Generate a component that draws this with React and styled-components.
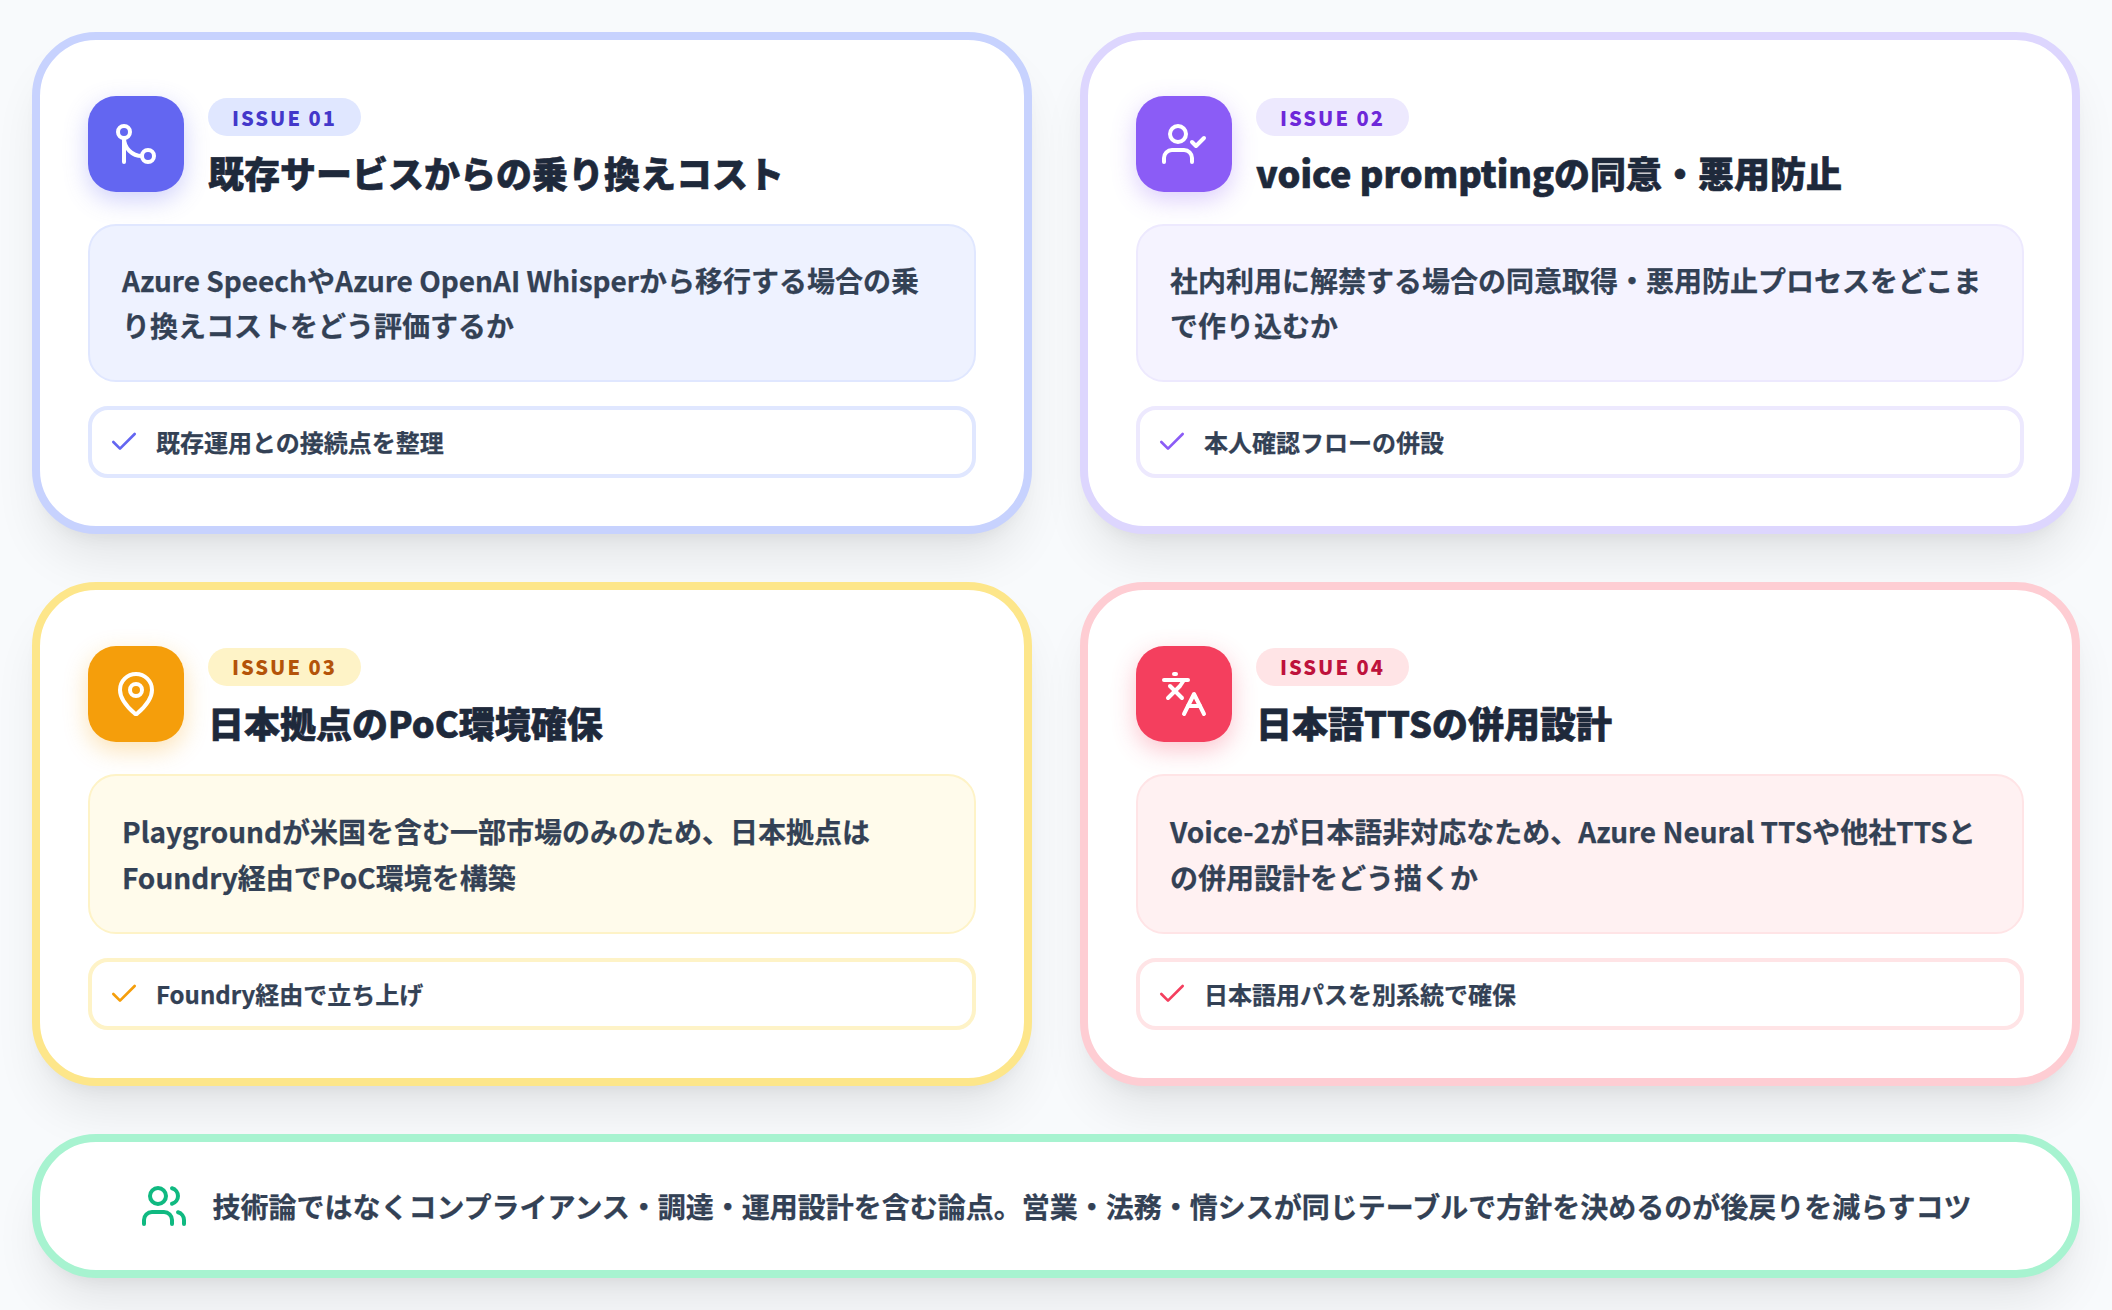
import React from "react";
import styled, { createGlobalStyle } from "styled-components";
import { GitMerge, UserCheck, MapPin, Languages, Users, Check } from "lucide-react";

const Global = createGlobalStyle`
  * { box-sizing: border-box; }
  html, body { margin: 0; padding: 0; background: #f8fafc; }
  body { font-family: "Noto Sans CJK JP", "Noto Sans", sans-serif; }
`;

const Page = styled.main`
  width: 2112px;
  height: 1310px;
  padding: 32px;
  display: flex;
  flex-direction: column;
  gap: 48px;
  background: #f8fafc;
`;

const Grid = styled.section`
  display: grid;
  grid-template-columns: 1fr 1fr;
  gap: 48px;
`;

const shadow = "0 32px 50px -10px rgba(0, 0, 0, 0.09), 0 12px 20px -12px rgba(0, 0, 0, 0.08)";

const Card = styled.article`
  background: #fff;
  border: 8px solid ${(p) => p.$t.border};
  border-radius: 64px;
  padding: 56px 48px 48px;
  box-shadow: ${shadow};
  display: flex;
  flex-direction: column;
`;

const Header = styled.header`
  display: flex;
  align-items: flex-start;
  gap: 24px;
  margin-bottom: 32px;
`;

const IconBox = styled.div`
  width: 96px;
  height: 96px;
  flex: none;
  border-radius: 28px;
  background: ${(p) => p.$t.main};
  color: #fff;
  display: flex;
  align-items: center;
  justify-content: center;
  box-shadow: 0 8px 24px ${(p) => p.$t.glow};
`;

const Heading = styled.div`
  display: flex;
  flex-direction: column;
  align-items: flex-start;
  gap: 16px;
  padding-top: 2px;
`;

const Pill = styled.span`
  padding: 0 24px;
  height: 38px;
  display: inline-flex;
  align-items: center;
  border-radius: 19px;
  background: ${(p) => p.$t.pill};
  color: ${(p) => p.$t.pillText};
  font-size: 20px;
  font-weight: 900;
  letter-spacing: 2px;
`;

const Title = styled.h2`
  margin: 0;
  font-size: 36px;
  line-height: 40px;
  font-weight: 900;
  color: #1e293b;
  -webkit-text-stroke: 0.6px #1e293b;
`;

const Desc = styled.p`
  margin: 0 0 24px;
  padding: 32px;
  background: ${(p) => p.$t.soft};
  border: 2px solid ${(p) => p.$t.line};
  border-radius: 28px;
  font-size: 28px;
  line-height: ${(p) => p.$lh}px;
  font-weight: 700;
  color: #334155;
  -webkit-text-stroke: 0.25px #334155;
`;

const CheckRow = styled.div`
  display: flex;
  align-items: center;
  gap: 16px;
  padding: 16px;
  background: #fff;
  border: 4px solid ${(p) => p.$t.line};
  border-radius: 20px;
  font-size: 24px;
  line-height: 32px;
  font-weight: 700;
  color: #334155;
  -webkit-text-stroke: 0.25px #334155;
  & > svg { color: ${(p) => p.$t.main}; flex: none; }
`;

const Footer = styled.footer`
  height: 144px;
  flex: none;
  display: flex;
  align-items: center;
  justify-content: center;
  gap: 24px;
  background: #fff;
  border: 8px solid #a7f3d0;
  border-radius: 64px;
  box-shadow: ${shadow};
  font-size: 28px;
  font-weight: 700;
  color: #334155;
  -webkit-text-stroke: 0.25px #334155;
  & > svg { color: #10b981; flex: none; }
`;

const themes = {
  indigo: { border: "#c7d2fe", main: "#6366f1", glow: "rgba(99,102,241,.3)", pill: "#e0e7ff", pillText: "#4338ca", soft: "#eef2ff", line: "#e0e7ff" },
  violet: { border: "#ddd6fe", main: "#8b5cf6", glow: "rgba(139,92,246,.3)", pill: "#ede9fe", pillText: "#6d28d9", soft: "#f5f3ff", line: "#ede9fe" },
  amber: { border: "#fde68a", main: "#f59e0b", glow: "rgba(245,158,11,.3)", pill: "#fef3c7", pillText: "#b45309", soft: "#fffbeb", line: "#fef3c7" },
  rose: { border: "#fecdd3", main: "#f43f5e", glow: "rgba(244,63,94,.3)", pill: "#ffe4e6", pillText: "#be123c", soft: "#fff1f2", line: "#ffe4e6" },
};

const issues = [
  { no: "01", lh: 44.8, t: themes.indigo, Icon: GitMerge, title: "既存サービスからの乗り換えコスト", desc: "Azure SpeechやAzure OpenAI Whisperから移行する場合の乗り換えコストをどう評価するか", check: "既存運用との接続点を整理" },
  { no: "02", lh: 44.8, t: themes.violet, Icon: UserCheck, title: "voice promptingの同意・悪用防止", desc: "社内利用に解禁する場合の同意取得・悪用防止プロセスをどこまで作り込むか", check: "本人確認フローの併設" },
  { no: "03", lh: 46, t: themes.amber, Icon: MapPin, title: "日本拠点のPoC環境確保", desc: "Playgroundが米国を含む一部市場のみのため、日本拠点はFoundry経由でPoC環境を構築", check: "Foundry経由で立ち上げ" },
  { no: "04", lh: 46, t: themes.rose, Icon: Languages, title: "日本語TTSの併用設計", desc: "Voice-2が日本語非対応なため、Azure Neural TTSや他社TTSとの併用設計をどう描くか", check: "日本語用パスを別系統で確保" },
];

export default function App() {
  return (
    <>
      <Global />
      <Page>
        <Grid>
          {issues.map(({ no, lh, t, Icon, title, desc, check }) => (
            <Card key={no} $t={t}>
              <Header>
                <IconBox $t={t}><Icon size={48} strokeWidth={2} /></IconBox>
                <Heading>
                  <Pill $t={t}>ISSUE {no}</Pill>
                  <Title>{title}</Title>
                </Heading>
              </Header>
              <Desc $t={t} $lh={lh}>{desc}</Desc>
              <CheckRow $t={t}><Check size={32} strokeWidth={2} />{check}</CheckRow>
            </Card>
          ))}
        </Grid>
        <Footer>
          <Users size={48} strokeWidth={2} />
          技術論ではなくコンプライアンス・調達・運用設計を含む論点。営業・法務・情シスが同じテーブルで方針を決めるのが後戻りを減らすコツ
        </Footer>
      </Page>
    </>
  );
}
